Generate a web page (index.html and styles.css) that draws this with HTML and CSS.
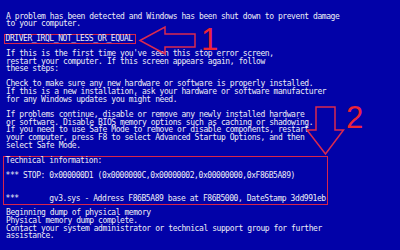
FILE: index.html
```html
<!DOCTYPE html>
<html lang="en">
<head>
<meta charset="utf-8">
<title>Blue screen</title>
<link rel="stylesheet" href="styles.css">
</head>
<body>
<main class="screen">
<p class="para">A problem has been detected and Windows has been shut down to prevent damage
to your computer.</p>
<p class="para"><span class="box box-code">DRIVER_IRQL_NOT_LESS_OR_EQUAL</span></p>
<p class="para">If this is the first time you've seen this stop error screen,
restart your computer. If this screen appears again, follow
these steps:</p>
<p class="para">Check to make sure any new hardware or software is properly installed.
If this is a new installation, ask your hardware or software manufacturer
for any Windows updates you might need.</p>
<p class="para">If problems continue, disable or remove any newly installed hardware
or software. Disable BIOS memory options such as caching or shadowing.
If you need to use Safe Mode to remove or disable components, restart
your computer, press F8 to select Advanced Startup Options, and then
select Safe Mode.</p>
<section class="box box-tech">
<p class="para">Technical information:</p>
<p class="para para-gap2">*** STOP: 0x000000D1 (0x0000000C,0x00000002,0x00000000,0xF86B5A89)</p>
<p class="para para-last">***       gv3.sys - Address F86B5A89 base at F86B5000, DateStamp 3dd991eb</p>
</section>
<p class="para">Beginning dump of physical memory
Physical memory dump complete.
Contact your system administrator or technical support group for further
assistance.</p>
</main>
<svg class="marks" width="400" height="250" viewBox="0 0 400 250" aria-hidden="false">
  <path class="arrow" d="M140 40.5 L165 27 L165 34 L195 34 L195 47 L165 47 L165 54 Z"/>
  <path class="arrow" d="M316 107 L335 107 L335 130 L343.5 130 L325.5 154 L307 130 L316 130 Z"/>
  <text class="num" x="201" y="50">1</text>
  <text class="num" x="346" y="128">2</text>
</svg>
</body>
</html>
```
FILE: styles.css
```css
html, body {
  margin: 0;
  padding: 0;
}
body {
  width: 400px;
  height: 250px;
  overflow: hidden;
  background: #0202a8;
  position: relative;
}
.screen {
  padding: 12.7px 0 0 6px;
  color: #eeeef6;
  font-family: "DejaVu Sans Mono", "Liberation Mono", monospace;
  font-size: 8px;
  letter-spacing: -0.43px;
  line-height: 7.64px;
}
.para {
  margin: 0 0 7.64px;
  white-space: pre;
}
.para-gap2 {
  margin-bottom: 15.28px;
}
.para-last {
  margin-bottom: 0;
}
.box {
  border: 1.5px solid #d8264a;
}
.box-code {
  display: block;
  width: fit-content;
  margin: -1.5px 0 -1.5px -2px;
  padding: 0 2px 0 0.5px;
}
.box-tech {
  box-sizing: border-box;
  width: 325px;
  margin: -1.2px 0 4.34px -3px;
  padding: 0 0 1.5px 1.5px;
}
.marks {
  position: absolute;
  left: 0;
  top: 0;
  pointer-events: none;
}
.arrow {
  fill: none;
  stroke: #dc2a4e;
  stroke-width: 1.5;
  stroke-linejoin: miter;
}
.num {
  fill: #ec2438;
  font-family: "Liberation Sans", Arial, sans-serif;
  font-size: 31px;
}
```
